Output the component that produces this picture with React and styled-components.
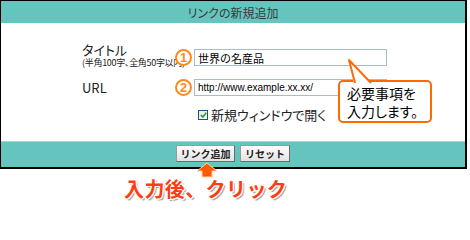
import React from 'react';
import styled, { createGlobalStyle } from 'styled-components';

const GlobalStyle = createGlobalStyle`
  body {
    margin: 0;
    background: #fff;
    font-family: "Noto Sans CJK JP", "Liberation Sans", sans-serif;
    font-feature-settings: "palt";
  }
`;

const Page = styled.div`
  width: 470px;
  height: 205px;
  overflow: hidden;
`;

const Box = styled.div`
  width: 467px;
  box-sizing: border-box;
  border-left: 1px solid #000;
  border-top: 1px solid #000;
  border-right: 2px solid #000;
  border-bottom: 2px solid #000;
  display: flex;
  flex-direction: column;
`;

const Header = styled.div`
  height: 22px;
  background: #66c4bf;
  color: #3a3a3a;
  font-size: 12px;
  display: flex;
  align-items: center;
  justify-content: center;
`;

const Body = styled.div`
  position: relative;
  height: 118px;
  box-sizing: border-box;
  padding: 19px 0 0 81px;
  display: flex;
  flex-direction: column;
`;

const Row = styled.div`
  display: flex;
  align-items: flex-start;
  margin-bottom: ${p => p.$gap || 0}px;
`;

const LabelBlock = styled.div`
  width: 93px;
  display: flex;
  flex-direction: column;
  color: #222;
`;

const Label = styled.span`
  font-size: 13px;
  line-height: ${p => p.$lh || 15}px;
`;

const Note = styled.span`
  font-size: 9px;
  line-height: 12px;
  white-space: nowrap;
  letter-spacing: -0.3px;
`;

const Field = styled.div`
  display: flex;
  align-items: center;
  margin-top: ${p => p.$top || 0}px;
`;

const Num = styled.span`
  width: 17px;
  height: 17px;
  box-sizing: border-box;
  border: 2px solid #ff8a1c;
  border-radius: 50%;
  color: #ff8a1c;
  background: #fff;
  font-family: "Liberation Sans", sans-serif;
  font-weight: bold;
  font-size: 13px;
  display: flex;
  align-items: center;
  justify-content: center;
  margin-right: 2px;
`;

const Input = styled.input`
  width: 193px;
  height: 17px;
  box-sizing: border-box;
  border: 1px solid #a9bccf;
  padding: 0 3px;
  font-family: "Liberation Sans", "Noto Sans CJK JP", sans-serif;
  font-size: ${p => p.$size || 11}px;
  color: #000;
  outline: none;
`;

const CheckRow = styled.label`
  display: flex;
  align-items: center;
  margin-left: 116px;
  font-size: 13px;
  color: #222;
  line-height: 15px;
`;

const CheckBox = styled.span`
  width: 10px;
  height: 10px;
  box-sizing: border-box;
  border: 1px solid #1c5180;
  background: linear-gradient(135deg, #e4e4e0, #fff);
  display: flex;
  align-items: center;
  justify-content: center;
  margin-right: 3px;
`;

const Bubble = styled.div`
  position: absolute;
  left: 337px;
  top: 57px;
  width: 94px;
  height: 43px;
  box-sizing: border-box;
  border: 2px solid #ff6a00;
  border-radius: 5px;
  background: #fff;
  padding: 2px 0 0 7px;
  font-size: 14px;
  line-height: 18px;
  color: #000;
`;

const Tail = styled.svg`
  position: absolute;
  left: -2px;
  top: -24px;
`;

const Footer = styled.div`
  height: 26px;
  box-sizing: border-box;
  background: #66c4bf;
  border-top: 1px solid #9fd8d4;
  display: flex;
  justify-content: center;
  align-items: flex-start;
  gap: 5px;
  padding: 3px 0 0 0;
`;

const Button = styled.button`
  width: ${p => p.$w}px;
  height: 17px;
  box-sizing: border-box;
  border: 1px solid #9a9a9a;
  border-right-color: #6a6a6a;
  border-bottom-color: #6a6a6a;
  background: linear-gradient(#ffffff, #e2e2e2);
  font-family: "Noto Sans CJK JP", sans-serif;
  font-size: 10px;
  font-weight: bold;
  color: #222;
  padding: 0;
  line-height: 15px;
`;

const Below = styled.div`
  position: relative;
  padding: 8px 0 0 124px;
`;

const Arrow = styled.svg`
  position: absolute;
  left: 196px;
  top: -7px;
`;

const Callout = styled.div`
  font-size: 20px;
  line-height: 24px;
  font-weight: bold;
  font-feature-settings: normal;
  color: #ff3c14;
  letter-spacing: 0.4px;
  text-shadow:
    -1px -1px 0 #fff, 1px -1px 0 #fff, -1px 1px 0 #fff, 1px 1px 0 #fff,
    0 -1px 0 #fff, 0 1px 0 #fff, -1px 0 0 #fff, 1px 0 0 #fff,
    2px 2px 1px #9a9a9a;
`;

export default function App() {
  return (
    <Page>
      <GlobalStyle />
      <Box>
        <Header>リンクの新規追加</Header>
        <Body>
          <Row $gap={11}>
            <LabelBlock>
              <Label>タイトル</Label>
              <Note>(半角100字、全角50字以内)</Note>
            </LabelBlock>
            <Field $top={7}>
              <Num>1</Num>
              <Input defaultValue="世界の名産品" $size={11} />
            </Field>
          </Row>
          <Row $gap={11}>
            <LabelBlock>
              <Label $lh={16}>URL</Label>
            </LabelBlock>
            <Field $top={-1}>
              <Num>2</Num>
              <Input defaultValue="http://www.example.xx.xx/" $size={10} />
            </Field>
          </Row>
          <CheckRow>
            <CheckBox>
              <svg width="7" height="6" viewBox="0 0 7 6">
                <path d="M0.8 3 L2.8 5 L6.2 0.8" fill="none" stroke="#1aa51a" strokeWidth="1.6" />
              </svg>
            </CheckBox>
            新規ウィンドウで開く
          </CheckRow>
          <Bubble>
            <Tail width="40" height="28" viewBox="0 0 40 28">
              <polygon points="16,27 11,2 34,27" fill="#fff" />
              <polyline points="17,25 11,2 33,25" fill="none" stroke="#ff6a00" strokeWidth="2" strokeLinejoin="round" />
            </Tail>
            必要事項を<br />入力します。
          </Bubble>
        </Body>
        <Footer>
          <Button $w={59}>リンク追加</Button>
          <Button $w={50}>リセット</Button>
        </Footer>
      </Box>
      <Below>
        <Arrow width="22" height="16" viewBox="0 0 22 16">
          <path d="M11 1 L21 9 L16 9 L16 15 L6 15 L6 9 L1 9 Z" fill="#ff5a00" stroke="#ffd2b0" strokeWidth="1" strokeLinejoin="round" />
        </Arrow>
        <Callout>入力後、クリック</Callout>
      </Below>
    </Page>
  );
}
